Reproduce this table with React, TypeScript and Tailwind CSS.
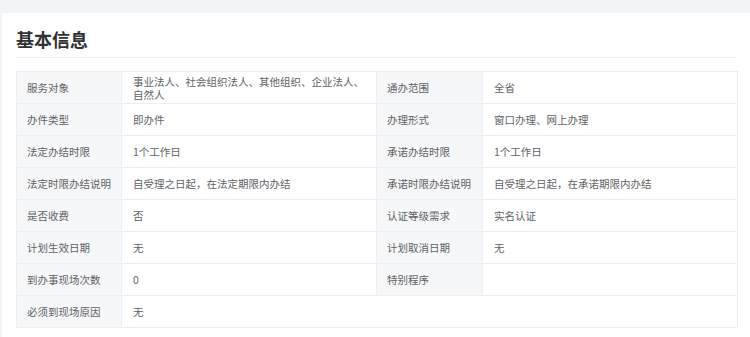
const rows: [string, string, string, string][] = [
  ["服务对象", "事业法人、社会组织法人、其他组织、企业法人、自然人", "通办范围", "全省"],
  ["办件类型", "即办件", "办理形式", "窗口办理、网上办理"],
  ["法定办结时限", "1个工作日", "承诺办结时限", "1个工作日"],
  ["法定时限办结说明", "自受理之日起，在法定期限内办结", "承诺时限办结说明", "自受理之日起，在承诺期限内办结"],
  ["是否收费", "否", "认证等级需求", "实名认证"],
  ["计划生效日期", "无", "计划取消日期", "无"],
  ["到办事现场次数", "0", "特别程序", ""],
]

const label = "h-8 flex items-center px-[10px] bg-[#f6f7f9] border-r border-b border-[#ebeef2]"
const value = "h-8 flex items-center px-[11px] border-r border-b border-[#ebeef2]"

export default function App() {
  return (
    <div
      className="w-[750px] h-[337px] bg-[#f3f4f6] pt-[13px] pl-[2px] overflow-hidden"
      style={{ fontFamily: '"Noto Sans CJK SC", "Noto Sans", sans-serif' }}
    >
      <div className="bg-white h-full pl-[14px] pr-[13px]">
        <div className="pt-[14px] pb-[6px] border-b border-[#eceef1]">
          <h2 className="text-[18px] leading-6 font-bold text-[#303133]">基本信息</h2>
        </div>

        <div className="mt-[13px] w-[722px] grid grid-cols-[105px_255px_106px_1fr] border-l border-t border-[#ebeef2] text-[10.5px] leading-[13px] text-[#606266]">
          {rows.map((r) => (
            <div key={r[0]} className="contents">
              <div className={label}>{r[0]}</div>
              <div className={value}>{r[1]}</div>
              <div className={label}>{r[2]}</div>
              <div className={value}>{r[3]}</div>
            </div>
          ))}
          <div className={label}>必须到现场原因</div>
          <div className={`${value} col-span-3`}>无</div>
        </div>
      </div>
    </div>
  )
}
